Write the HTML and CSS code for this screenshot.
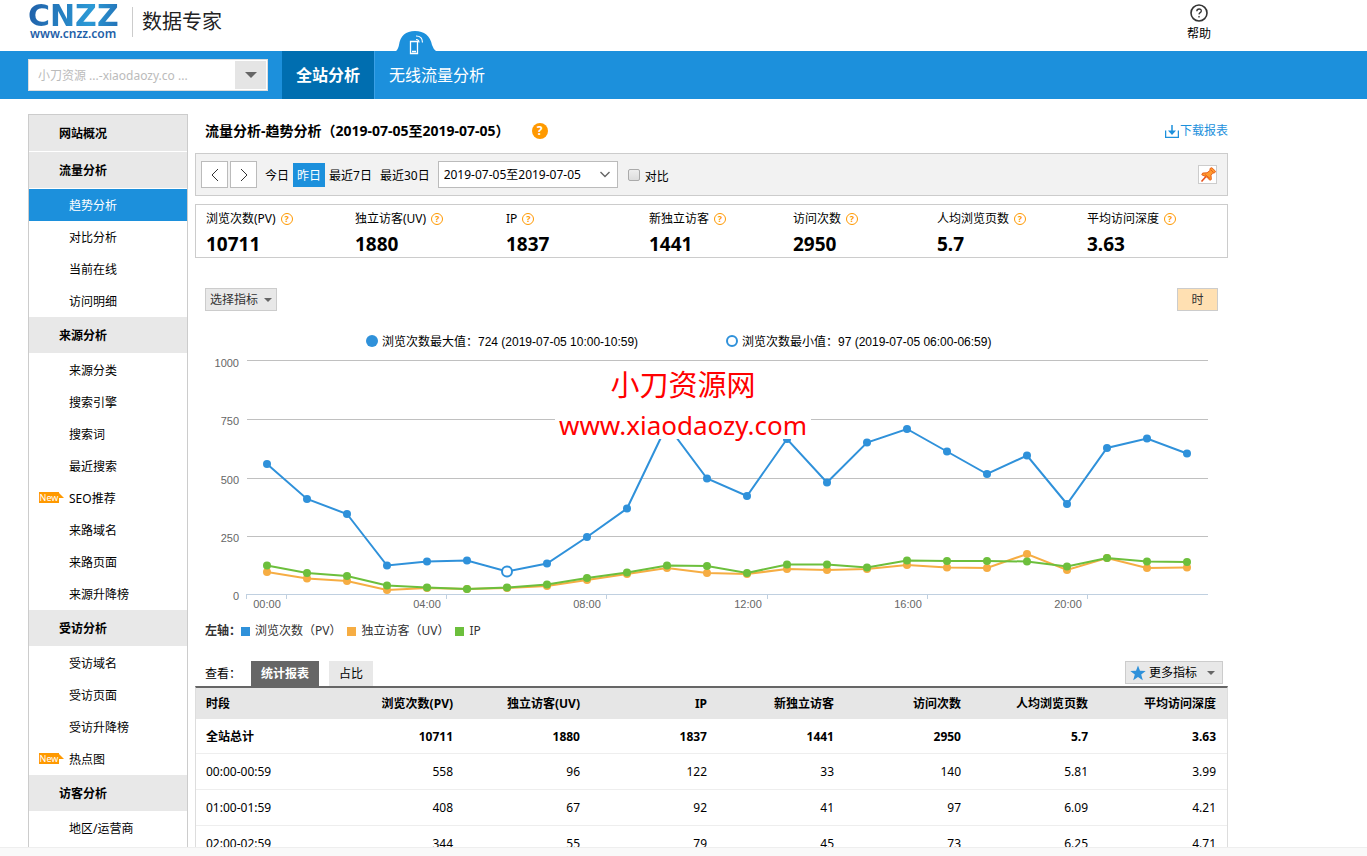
FILE: index.html
```html
<!DOCTYPE html>
<html lang="zh-CN">
<head>
    <meta charset="UTF-8">
    <meta name="viewport" content="width=device-width, initial-scale=1.0">
    <title>CNZZ 数据专家</title>
    <link rel="stylesheet" href="styles.css">
</head>
<body>
    <div class="page">
        <header class="header">
            <div class="wrap header-inner">
                <a href="#" class="logo">
                    <span class="logo-name">CNZZ</span>
                    <span class="logo-url">www.cnzz.com</span>
                </a>
                <span class="slogan">数据专家</span>
                <a href="#" class="help">
                    <svg width="18" height="18" viewBox="0 0 18 18"><circle cx="9" cy="9" r="8" fill="none" stroke="#333" stroke-width="1.6"/><path d="M6.8 7.2q.1-2.2 2.3-2.2t2.2 1.9q0 1-1.1 1.7T9 10.400M9 12v1.400" fill="none" stroke="#333" stroke-width="1.300"/></svg>
                    <span>帮助</span>
                </a>
            </div>
        </header>

        <nav class="navbar">
            <div class="wrap navbar-inner">
                <div class="site-picker">
                    <input type="text" aria-label="站点" placeholder="小刀资源 ...-xiaodaozy.co ...">
                    <button type="button" aria-label="选择站点"><svg width="12" height="6" viewBox="0 0 12 6"><path d="M0 0h12L6 6z" fill="#666"/></svg></button>
                </div>
                <a href="#" class="nav-tab active">全站分析</a>
                <a href="#" class="nav-tab wireless">无线流量分析
                    <svg class="bump" width="42" height="24" viewBox="0 0 42 24">
                        <path d="M0 21q3-2 4-7Q6 0 20 0t17 14q1 4 5 7v3H0z" fill="#1c90dc"/>
                        <path d="M15.500 10.500h7v12h-7zM17 20.500h4" fill="none" stroke="#fff" stroke-width="1.300"/>
                        <path d="M21 8.500q3 0 3 3M21 5q6.500 0 6.500 6.500" fill="none" stroke="#fff" stroke-width="1.200"/>
                    </svg>
                </a>
            </div>
        </nav>

        <div class="wrap content">
            <aside class="sidebar">
                <a href="#" class="side-head">网站概况</a>
                <a href="#" class="side-head">流量分析</a>
                <a href="#" class="side-item active">趋势分析</a>
                <a href="#" class="side-item">对比分析</a>
                <a href="#" class="side-item">当前在线</a>
                <a href="#" class="side-item">访问明细</a>
                <a href="#" class="side-head">来源分析</a>
                <a href="#" class="side-item">来源分类</a>
                <a href="#" class="side-item">搜索引擎</a>
                <a href="#" class="side-item">搜索词</a>
                <a href="#" class="side-item">最近搜索</a>
                <a href="#" class="side-item"><span class="new">New</span>SEO推荐</a>
                <a href="#" class="side-item">来路域名</a>
                <a href="#" class="side-item">来路页面</a>
                <a href="#" class="side-item">来源升降榜</a>
                <a href="#" class="side-head">受访分析</a>
                <a href="#" class="side-item">受访域名</a>
                <a href="#" class="side-item">受访页面</a>
                <a href="#" class="side-item">受访升降榜</a>
                <a href="#" class="side-item"><span class="new">New</span>热点图</a>
                <a href="#" class="side-head">访客分析</a>
                <a href="#" class="side-item">地区/运营商</a>
            </aside>

            <main class="main">
                <div class="title-row">
                    <h1>流量分析-趋势分析（2019-07-05至2019-07-05）</h1>
                    <span class="help-dot">?</span>
                    <a href="#" class="download">
                        <svg width="14" height="13" viewBox="0 0 14 13"><path d="M.5 5.500v7h13v-7M7 0v8" fill="none" stroke="#1c90dc" stroke-width="1.500"/><path d="M3 5.500h8L7 10z" fill="#1c90dc"/></svg>下载报表
                    </a>
                </div>

                <div class="toolbar">
                    <button type="button" class="arrow" aria-label="前一天"><svg width="8" height="14" viewBox="0 0 8 14"><path d="M7 1L1 7l6 6" fill="none" stroke="#333"/></svg></button>
                    <button type="button" class="arrow" aria-label="后一天"><svg width="8" height="14" viewBox="0 0 8 14"><path d="M1 1l6 6-6 6" fill="none" stroke="#333"/></svg></button>
                    <div class="ranges">
                        <a href="#">今日</a>
                        <a href="#" class="active">昨日</a>
                        <a href="#">最近7日</a>
                        <a href="#">最近30日</a>
                    </div>
                    <div class="date-select">
                        <select aria-label="日期范围">
                            <option>2019-07-05至2019-07-05</option>
                        </select>
                        <svg width="10" height="7" viewBox="0 0 10 7"><path d="M.5 1L5 5.500 9.500 1" fill="none" stroke="#666" stroke-width="1.400"/></svg>
                    </div>
                    <input type="checkbox" id="compare">
                    <label for="compare">对比</label>
                    <button type="button" class="pin" aria-label="固定"><svg width="16" height="16" viewBox="0 0 16 16"><path d="M6 9.500L1.500 14.500" stroke="#e8501c" stroke-width="1.600"/><path d="M10 1.500l1.800-.8 3.700 3.500-.8 1.600-2.200.4-1.500 2.200.3 4.100-1.500.7-3-3.200-5-2.200.8-1.700L7 5.800l3-2.300z" fill="#ff9a2e" stroke="#e8601c"/><path d="M5 7.500l5 4M11 3l2.500 2.500" stroke="#e8601c"/></svg></button>
                </div>

                <div class="stats">
                    <div class="stat"><span>浏览次数(PV)<i>?</i></span><b>10711</b></div>
                    <div class="stat"><span>独立访客(UV)<i>?</i></span><b>1880</b></div>
                    <div class="stat"><span>IP<i>?</i></span><b>1837</b></div>
                    <div class="stat"><span>新独立访客<i>?</i></span><b>1441</b></div>
                    <div class="stat"><span>访问次数<i>?</i></span><b>2950</b></div>
                    <div class="stat"><span>人均浏览页数<i>?</i></span><b>5.7</b></div>
                    <div class="stat"><span>平均访问深度<i>?</i></span><b>3.63</b></div>
                </div>

                <div class="chart-tools">
                    <button type="button" class="btn">选择指标<span class="caret"></span></button>
                    <button type="button" class="btn hour">时</button>
                </div>

                <svg class="chart" viewBox="0 0 1033 290">
                    <defs>
                        <marker id="dot-pv" markerUnits="userSpaceOnUse" markerWidth="10" markerHeight="10" refX="5" refY="5"><circle cx="5" cy="5" r="4" fill="#2f91da"/></marker>
                        <marker id="dot-uv" markerUnits="userSpaceOnUse" markerWidth="10" markerHeight="10" refX="5" refY="5"><circle cx="5" cy="5" r="4" fill="#f6ad43"/></marker>
                        <marker id="dot-ip" markerUnits="userSpaceOnUse" markerWidth="10" markerHeight="10" refX="5" refY="5"><circle cx="5" cy="5" r="4" fill="#6cbf3c"/></marker>
                    </defs>

                    <!-- max / min -->
                    <circle cx="177" cy="16" r="6" fill="#2f91da"/>
                    <text class="peak" x="187" y="21">浏览次数最大值：724 (2019-07-05 10:00-10:59)</text>
                    <circle cx="537" cy="16" r="5" fill="#fff" stroke="#2f91da" stroke-width="2"/>
                    <text class="peak" x="547" y="21">浏览次数最小值：97 (2019-07-05 06:00-06:59)</text>

                    <!-- grid and axis -->
                    <path class="grid" d="M52 35.500H1013M52 94.500H1013M52 153.500H1013M52 211.500H1013"/>
                    <path class="axis" d="M51.500 269.500H1013M51.500 269v5M91.500 269v5M251.500 269v5M411.500 269v5M572.500 269v5M732.500 269v5M892.500 269v5"/>
                    <g class="label-y">
                        <text x="44" y="42">1000</text>
                        <text x="44" y="100">750</text>
                        <text x="44" y="159">500</text>
                        <text x="44" y="217">250</text>
                        <text x="44" y="275">0</text>
                    </g>
                    <g class="label-x">
                        <text x="72" y="283">00:00</text>
                        <text x="232" y="283">04:00</text>
                        <text x="392" y="283">08:00</text>
                        <text x="553" y="283">12:00</text>
                        <text x="713" y="283">16:00</text>
                        <text x="873" y="283">20:00</text>
                    </g>

                    <!-- series -->
                    <polyline class="line pv" points="72,139 112,174 152,189 192,240.500 232,236.500 272,235.500 312,246.500 352,238.500 392,212 432,183.500 472,100 512,153.500 552,171 592,114 632,157.500 672,117.500 712,104 752,126.500 792,149 832,130.500 872,179 912,123 952,113.500 992,128.500"/>
                    <polyline class="line uv" points="72,247 112,253.500 152,256 192,265 232,263 272,264 312,263 352,261 392,255 432,249 472,243 512,248 552,249 592,244 632,245 672,244 712,240 752,242.500 792,243 832,229 872,245 912,233 952,243 992,242.500"/>
                    <polyline class="line ip" points="72,240.500 112,248 152,251 192,260.500 232,262.500 272,264 312,262.500 352,259.500 392,253 432,247.500 472,240.500 512,241 552,248 592,239.500 632,239.500 672,242.500 712,235.500 752,236 792,236 832,236.500 872,241.500 912,233 952,236.500 992,237"/>
                    <circle cx="312" cy="246.500" r="5" fill="#fff" stroke="#2f91da" stroke-width="2"/>

                    <!-- watermark -->
                    <rect x="360" y="93" width="256" height="21" fill="#fff"/>
                    <text class="mark mark-name" x="488" y="71">小刀资源网</text>
                    <text class="mark mark-url" x="488" y="110">www.xiaodaozy.com</text>
                </svg>

                <div class="legend">
                    <b>左轴：</b>
                    <span class="key"><i class="pv"></i>浏览次数（PV）</span>
                    <span class="key"><i class="uv"></i>独立访客（UV）</span>
                    <span class="key"><i class="ip"></i>IP</span>
                </div>

                <div class="tabs">
                    <span class="tabs-label">查看：</span>
                    <button type="button" class="tab active">统计报表</button>
                    <button type="button" class="tab">占比</button>
                    <button type="button" class="btn more">
                        <svg width="16" height="16" viewBox="0 0 16 16"><path d="M8 .5l2 5.300 5.700.2-4.500 3.600 1.600 5.600L8 12l-4.800 3.200 1.600-5.600L.3 6l5.700-.2z" fill="#2f91da"/></svg>更多指标<span class="caret"></span>
                    </button>
                </div>

                <table class="report">
                    <thead>
                        <tr><th class="period">时段</th><th>浏览次数(PV)</th><th>独立访客(UV)</th><th>IP</th><th>新独立访客</th><th>访问次数</th><th>人均浏览页数</th><th class="depth">平均访问深度</th></tr>
                    </thead>
                    <tbody>
                        <tr class="total"><td>全站总计</td><td>10711</td><td>1880</td><td>1837</td><td>1441</td><td>2950</td><td>5.7</td><td>3.63</td></tr>
                        <tr><td>00:00-00:59</td><td>558</td><td>96</td><td>122</td><td>33</td><td>140</td><td>5.81</td><td>3.99</td></tr>
                        <tr><td>01:00-01:59</td><td>408</td><td>67</td><td>92</td><td>41</td><td>97</td><td>6.09</td><td>4.21</td></tr>
                        <tr><td>02:00-02:59</td><td>344</td><td>55</td><td>79</td><td>45</td><td>73</td><td>6.25</td><td>4.71</td></tr>
                    </tbody>
                </table>
            </main>
        </div>
        <footer class="bottom-bar"></footer>
    </div>
</body>
</html>
```
FILE: styles.css
```css
* {
    box-sizing: border-box;
}
body {
    margin: 0;
    font-family: "Noto Sans", "Noto Sans CJK SC", sans-serif;
    font-size: 12px;
    line-height: 20px;
    color: #000;
    background-color: #fff;
}
a {
    color: inherit;
    text-decoration: none;
}
button, input, select {
    font: inherit;
    color: inherit;
    margin: 0;
    padding: 0;
    border-radius: 0;
}
button {
    cursor: pointer;
}
.page {
    display: flex;
    flex-direction: column;
    height: 100vh;
    overflow: hidden;
}
.wrap {
    margin: 0 28px;
    max-width: 1200px;
}

/* header */
.header {
    flex: none;
    height: 51px;
}
.header-inner {
    display: flex;
    align-items: flex-start;
}
.logo {
    width: 104px;
    margin-top: 4px;
}
.logo span {
    display: block;
}
.logo-name {
    font: bold 30px/24px "DejaVu Sans", sans-serif;
    background: linear-gradient(100deg, #1f5fa8, #2c9ad6 60%, #1f5fa8);
    background-clip: text;
    -webkit-background-clip: text;
    color: transparent;
}
.logo-url {
    padding-left: 2px;
    font-size: 12px;
    font-weight: 600;
    line-height: 12px;
    color: #1f5fa8;
}
.slogan {
    margin-top: 7px;
    padding-left: 9px;
    border-left: 1px solid #ccc;
    font-size: 20px;
    line-height: 30px;
    color: #222;
}
.help {
    display: flex;
    flex-direction: column;
    align-items: center;
    gap: 2px;
    margin: 4px 17px 0 auto;
}

/* nav */
.navbar {
    flex: none;
    background-color: #1c90dc;
}
.navbar-inner {
    display: flex;
    height: 48px;
}
.site-picker {
    display: flex;
    width: 240px;
    height: 32px;
    margin: 8px 14px 0 0;
    padding: 1px;
    background-color: #fff;
    border: 1px solid #ddd;
}
.site-picker input {
    flex: 1;
    min-width: 0;
    padding: 2px 0 0 8px;
    border: none;
    background: none;
}
.site-picker input::placeholder {
    color: #bbb;
}
.site-picker button {
    display: flex;
    align-items: center;
    justify-content: center;
    width: 31px;
    border: none;
    background-color: #e5e5e5;
}
.nav-tab {
    position: relative;
    padding: 0 14px;
    font-size: 16px;
    line-height: 48px;
    color: #fff;
}
.nav-tab.active {
    background-color: #006eb0;
    font-weight: bold;
}
.wireless {
    border-left: 1px solid #3aa0e6;
}
.bump {
    position: absolute;
    left: 20px;
    top: -20px;
}

/* layout */
.content {
    display: flex;
    flex: 1;
    gap: 7px;
    min-height: 0;
    padding-top: 15px;
    overflow: hidden;
}
.bottom-bar {
    flex: none;
    height: 9px;
    background-color: #f9f9f9;
    border-top: 1px solid #eee;
}

/* sidebar */
.sidebar {
    flex: none;
    width: 160px;
    border: 1px solid #ccc;
    border-bottom: none;
}
.side-head {
    display: block;
    padding: 2px 0 0 30px;
    font-weight: bold;
    line-height: 34px;
    background-color: #e8e8e8;
    border-bottom: 1px solid #fff;
}
.side-item {
    display: block;
    position: relative;
    padding: 2px 0 0 40px;
    line-height: 30px;
}
.side-item.active {
    color: #fff;
    background-color: #1c90dc;
}
.new {
    position: absolute;
    left: 10px;
    top: 10px;
    width: 20px;
    height: 11px;
    font-size: 9px;
    line-height: 11px;
    text-align: center;
    color: #fff;
    background-color: #f90;
}
.new::after {
    content: "";
    position: absolute;
    left: 20px;
    top: 1px;
    border-left: 5px solid #f90;
    border-top: 5px solid transparent;
}

/* title */
.main {
    flex: 1;
    min-width: 0;
}
.title-row {
    display: flex;
    align-items: center;
    height: 34px;
    margin-bottom: 5px;
    padding-left: 10px;
}
.title-row h1 {
    margin: 0;
    font-size: 14px;
}
.help-dot {
    width: 16px;
    height: 16px;
    margin-left: 22px;
    border-radius: 50%;
    font-weight: bold;
    line-height: 16px;
    text-align: center;
    color: #fff;
    background-color: #f90;
}
.download {
    display: flex;
    align-items: center;
    gap: 1px;
    margin-left: auto;
    color: #1c90dc;
}

/* toolbar */
.toolbar {
    display: flex;
    align-items: center;
    height: 43px;
    padding: 0 10px 0 5px;
    background-color: #f2f2f2;
    border: 1px solid #ccc;
}
.arrow {
    display: flex;
    align-items: center;
    justify-content: center;
    width: 27px;
    height: 27px;
    margin-right: 2px;
    background-color: #fff;
    border: 1px solid #bbb;
}
.ranges {
    display: flex;
    margin: 0 4px 0 2px;
}
.ranges a {
    padding: 2px 4px 0;
    line-height: 22px;
}
.ranges .active {
    color: #fff;
    background-color: #1c90dc;
}
.date-select {
    position: relative;
    width: 180px;
    margin-right: 10px;
}
.date-select select {
    display: block;
    width: 100%;
    height: 27px;
    padding: 1px 0 0 5px;
    appearance: none;
    background-color: #fff;
    border: 1px solid #bbb;
}
.date-select svg {
    position: absolute;
    right: 8px;
    top: 10px;
}
.toolbar input {
    width: 12px;
    height: 12px;
    appearance: none;
    border: 1px solid #aaa;
    border-radius: 2px;
    background: linear-gradient(#eee, #ddd);
}
.toolbar label {
    padding: 5px 0 0 5px;
}
.pin {
    display: flex;
    align-items: center;
    justify-content: center;
    width: 19px;
    height: 19px;
    margin-left: auto;
    background-color: #fff;
    border: 1px solid #ccc;
}

/* stats */
.stats {
    display: grid;
    grid-template-columns: 149fr 151fr 143fr 144fr 144fr 150fr 140fr;
    height: 54px;
    margin-top: 8px;
    padding: 4px 0 0 10px;
    border: 1px solid #ccc;
}
.stat span {
    display: flex;
    align-items: center;
}
.stat i {
    width: 12px;
    height: 12px;
    margin-left: 5px;
    border: 1px solid #f90;
    border-radius: 50%;
    font-size: 9px;
    font-style: normal;
    font-weight: bold;
    line-height: 10px;
    text-align: center;
    color: #f90;
}
.stat b {
    display: block;
    font-size: 19px;
    line-height: 30px;
}

/* buttons */
.chart-tools {
    display: flex;
    justify-content: space-between;
    margin: 30px 10px 14px;
}
.btn {
    display: flex;
    align-items: center;
    height: 23px;
    padding: 0 4px;
    color: #333;
    background-color: #e8e8e8;
    border: 1px solid #ccc;
}
.caret {
    margin-left: 6px;
    border: 4px solid transparent;
    border-top-color: #666;
    border-bottom: none;
}
.hour {
    justify-content: center;
    width: 41px;
    background-color: #ffe0b2;
}

/* chart */
.chart {
    display: block;
    width: 100%;
    font-family: "Liberation Sans", "Noto Sans CJK SC", sans-serif;
}
.chart .peak {
    font-size: 12px;
}
.grid {
    stroke: #c0c0c0;
}
.axis {
    fill: none;
    stroke: #c0d0e0;
}
.label-y, .label-x {
    font-size: 11px;
    fill: #666;
}
.label-y {
    text-anchor: end;
}
.label-x {
    text-anchor: middle;
}
.line {
    fill: none;
    stroke-width: 2;
}
.line.pv {
    stroke: #2f91da;
    marker: url(#dot-pv);
}
.line.uv {
    stroke: #f6ad43;
    marker: url(#dot-uv);
}
.line.ip {
    stroke: #6cbf3c;
    marker: url(#dot-ip);
}
.mark {
    fill: #f00;
    text-anchor: middle;
}
.mark-name {
    font-size: 29px;
}
.mark-url {
    font-family: "Noto Sans", sans-serif;
    font-size: 26px;
}
.legend {
    display: flex;
    align-items: center;
    height: 20px;
    margin-top: 6px;
    padding-left: 10px;
    color: #333;
}
.key {
    display: flex;
    align-items: center;
    margin-right: 6px;
}
.key i {
    width: 9px;
    height: 9px;
    margin-right: 5px;
}
.key .pv {
    background-color: #2f91da;
}
.key .uv {
    background-color: #f6ad43;
}
.key .ip {
    background-color: #6cbf3c;
}

/* report */
.tabs {
    display: flex;
    height: 25px;
    margin-top: 20px;
    padding: 0 5px 0 10px;
}
.tabs-label {
    width: 46px;
    line-height: 25px;
}
.tab {
    margin-right: 10px;
    padding: 0 10px;
    border: none;
    background-color: #e8e8e8;
}
.tab.active {
    font-weight: bold;
    color: #fff;
    background-color: #666;
}
.more {
    margin-left: auto;
    color: #000;
}
.more svg {
    margin-right: 3px;
}
.more .caret {
    margin: 0 3px 0 10px;
}
.report {
    width: 100%;
    table-layout: fixed;
    border-collapse: separate;
    border-spacing: 0;
    border: 1px solid #ddd;
    border-top: 2px solid #666;
}
.report th, .report td {
    height: 36px;
    padding: 0;
    text-align: right;
    border-bottom: 1px solid #eee;
}
.report th {
    height: 31px;
    background-color: #e6e6e6;
    border: none;
}
.report .total td {
    height: 35px;
    padding-top: 2px;
    font-weight: bold;
}
.report .period {
    width: 130px;
}
.report .depth {
    width: 139px;
}
.report th:first-child, .report td:first-child {
    padding-left: 10px;
    text-align: left;
}
.report th:last-child, .report td:last-child {
    padding-right: 11px;
}
```
